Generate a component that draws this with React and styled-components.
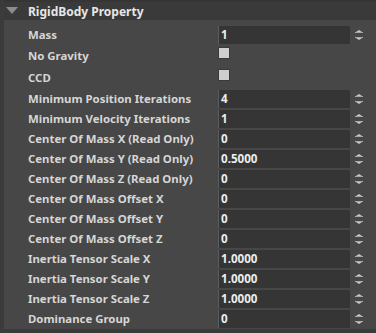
import React from 'react'
import styled, { createGlobalStyle } from 'styled-components'

const GlobalStyle = createGlobalStyle`
  html, body {
    margin: 0;
    padding: 0;
    background: #474747;
  }
  body {
    font-family: 'Noto Sans', 'Open Sans', sans-serif;
  }
`

const Panel = styled.div`
  width: 376px;
  height: 333px;
  box-sizing: border-box;
  background: #474747;
  border-left: 4px solid #3b3b3b;
  border-bottom: 4px solid #3b3b3b;
  display: flex;
  flex-direction: column;
  overflow: hidden;
`

const Header = styled.div`
  height: 22px;
  box-sizing: border-box;
  border-top: 2px solid #353535;
  background: #3a3a3a;
  display: flex;
  align-items: center;
  padding-left: 2px;
  gap: 10px;
  color: #e6e6e6;
  font-size: 12px;
  font-weight: 700;
`

const Body = styled.div`
  display: flex;
  flex-direction: column;
  padding-top: 5px;
`

const Row = styled.div`
  height: ${p => (p.$tall ? 22 : 20)}px;
  display: grid;
  grid-template-columns: 190px 132px 1fr;
  align-items: ${p => (p.$tall ? 'start' : 'center')};
  padding-left: 24px;
`

const Label = styled.div`
  color: #d6d6d6;
  font-size: 11.4px;
  font-weight: 700;
  white-space: nowrap;
  line-height: 18px;
  align-self: center;
`

const Field = styled.div`
  height: 18px;
  box-sizing: border-box;
  background: #353535;
  border-left: 1px solid #5c5c5c;
  color: #ececec;
  font-size: 11.6px;
  font-weight: 700;
  line-height: 18px;
  padding-left: 2px;
`

const Check = styled.div`
  width: 12px;
  height: 12px;
  margin-top: 2px;
  box-sizing: border-box;
  background: #cfcfcf;
  border: 1px solid #3a3a3a;
`

const Spin = styled.div`
  display: flex;
  justify-content: center;
  padding-right: 9px;
  svg {
    display: block;
  }
`

const SpinArrows = () => (
  <svg width="8" height="12" viewBox="0 0 8 12">
    <polygon points="4,1 7,3 1,3" fill="#c8c8c8" />
    <rect x="0" y="3" width="8" height="1" fill="#a8a8a8" />
    <rect x="0" y="8" width="8" height="1" fill="#a8a8a8" />
    <polygon points="1,9 7,9 4,11" fill="#c8c8c8" />
  </svg>
)

const Caret = () => (
  <svg width="12" height="8" viewBox="0 0 12 8">
    <polygon points="0,0 12,0 6,7" fill="#8c8c8c" />
  </svg>
)

const props = [
  { label: 'Mass', value: '1' },
  { label: 'No Gravity', check: true },
  { label: 'CCD', check: true },
  { label: 'Minimum Position Iterations', value: '4' },
  { label: 'Minimum Velocity Iterations', value: '1' },
  { label: 'Center Of Mass X (Read Only)', value: '0' },
  { label: 'Center Of Mass Y (Read Only)', value: '0.5000' },
  { label: 'Center Of Mass Z (Read Only)', value: '0' },
  { label: 'Center Of Mass Offset X', value: '0' },
  { label: 'Center Of Mass Offset Y', value: '0' },
  { label: 'Center Of Mass Offset Z', value: '0' },
  { label: 'Inertia Tensor Scale X', value: '1.0000' },
  { label: 'Inertia Tensor Scale Y', value: '1.0000' },
  { label: 'Inertia Tensor Scale Z', value: '1.0000' },
  { label: 'Dominance Group', value: '0' }
]

const App = () => {
  return (
    <Panel>
      <GlobalStyle />
      <Header>
        <Caret />
        <span>RigidBody Property</span>
      </Header>
      <Body>
        {props.map(p => (
          <Row key={p.label} $tall={p.check}>
            <Label>{p.label}</Label>
            {p.check ? <Check /> : <Field>{p.value}</Field>}
            {!p.check && (
              <Spin>
                <SpinArrows />
              </Spin>
            )}
          </Row>
        ))}
      </Body>
    </Panel>
  )
}

export default App
